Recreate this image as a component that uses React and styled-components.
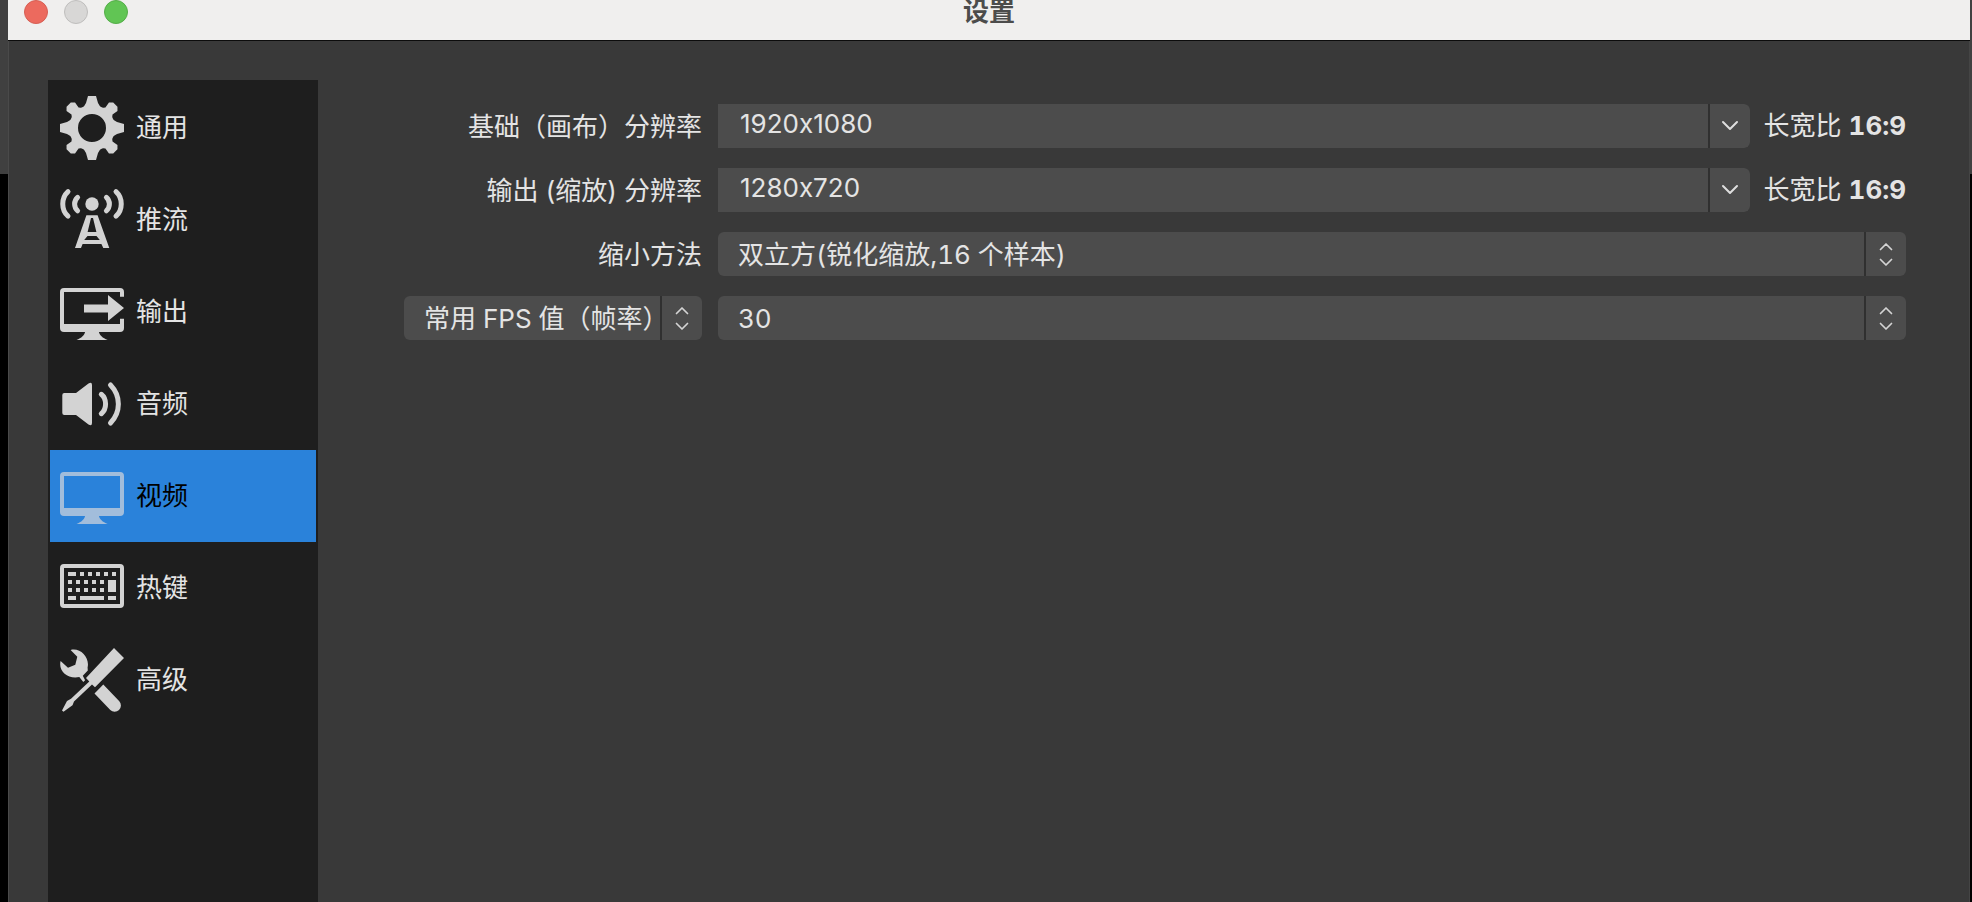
import React, { useState } from "react";
import styled, { createGlobalStyle } from "styled-components";

const GlobalStyle = createGlobalStyle`
  *, *::before, *::after { box-sizing: border-box; }
  body {
    margin: 0;
    background: #000;
    color: #e4e4e4;
    font-family: Inter, "Noto Sans CJK SC", sans-serif;
    font-size: 26px;
    line-height: 32px;
    font-feature-settings: "calt" 0;
  }
  button, input, select {
    font: inherit;
    font-feature-settings: inherit;
    color: inherit;
    margin: 0;
  }
`;

const Desktop = styled.div`
  min-height: 100vh;
  display: flex;
  padding: 0 2px 0 8px;
  background: linear-gradient(#404040 174px, #000 174px);
`;

const Window = styled.div`
  flex: 1;
  min-width: 0;
  display: flex;
  flex-direction: column;
  background: #393939;
`;

const TitleBar = styled.header`
  display: grid;
  grid-template-columns: 1fr auto 1fr;
  align-items: start;
  height: 41px;
  padding: 0 16px;
  background: #f0efee;
  border-bottom: 1px solid #0c0c0c;
`;

const Lights = styled.div`
  display: flex;
  gap: 16px;
`;

const Light = styled.button`
  width: 24px;
  height: 24px;
  padding: 0;
  border: 1px solid ${(p) => p.$edge};
  border-radius: 50%;
  background: ${(p) => p.$color};
`;

const Title = styled.h1`
  margin: 0;
  font-size: 26px;
  line-height: 24px;
  font-weight: 600;
  color: #4c4c4b;
`;

const Body = styled.div`
  flex: 1;
  display: flex;
  padding: 39px 64px 0 40px;
  gap: 86px;
  box-shadow: inset 1px 0 #4a4a4a, inset -1px 0 #454545;
`;

const Sidebar = styled.nav`
  flex: none;
  width: 270px;
  padding: 2px;
  background: #1e1e1e;
`;

const NavItem = styled.button`
  display: flex;
  align-items: center;
  gap: 12px;
  width: 100%;
  height: 92px;
  padding: 0 10px;
  border: 0;
  text-align: left;
  background: ${(p) => (p.$active ? "#2a82da" : "transparent")};
  color: ${(p) => (p.$active ? "#000" : "#e4e4e4")};

  svg {
    width: 64px;
    height: 64px;
    flex: none;
    color: ${(p) => (p.$active ? "#a2bddb" : "#d3d3d3")};
  }
`;

const Form = styled.form`
  flex: 1;
  min-width: 0;
  display: flex;
  flex-direction: column;
  gap: 20px;
  padding-top: 24px;
`;

const Row = styled.div`
  display: grid;
  grid-template-columns: 298px 1fr;
  gap: 16px;
  height: 44px;
  align-items: center;
`;

const Label = styled.label`
  padding-top: 2px;
  text-align: right;
  white-space: nowrap;
`;

const Field = styled.div`
  display: flex;
  align-items: center;
  gap: 14px;
`;

const Combo = styled.div`
  flex: 1;
  min-width: 0;
  display: flex;
  gap: 2px;
  height: 44px;
  border-radius: 0 6px 6px 0;
  background: #303030;
  overflow: hidden;
`;

const ComboInput = styled.input`
  flex: 1;
  min-width: 0;
  padding: 0 22px 4px;
  border: 0;
  outline: 0;
  background: #4c4c4c;
`;

const ComboButton = styled.button`
  display: grid;
  place-items: center;
  width: 40px;
  padding: 0;
  border: 0;
  background: #4c4c4c;
`;

const SelectShell = styled.div`
  display: grid;
  grid-template-columns: 1fr 42px;
  height: 44px;
  border-radius: 6px;
  background: #4c4c4c;
  overflow: hidden;
`;

const Select = styled.select`
  grid-area: 1 / 1 / 2 / 3;
  width: 100%;
  min-width: 0;
  padding: 2px 42px 0 20px;
  border: 0;
  outline: 0;
  appearance: none;
  background: transparent;
  font-variant-numeric: tabular-nums;

  option { background: #4c4c4c; }
`;

const Stepper = styled.span`
  grid-area: 1 / 2;
  display: grid;
  place-items: center;
  border-left: 2px solid #303030;
  pointer-events: none;
`;

const Ratio = styled.span`
  min-width: 142px;
  white-space: nowrap;
  font-variant-numeric: tabular-nums;
`;

const Glyph = ({ children }) => (
  <svg viewBox="0 0 64 64" fill="currentColor" aria-hidden="true">{children}</svg>
);

const Gear = () => (
  <Glyph>
    <path fillRule="evenodd" d="M32 9a23 23 0 1 0 0 46a23 23 0 1 0 0-46zM32 18a14 14 0 1 1 0 28a14 14 0 1 1 0-28z" />
    {[0, 90, 180, 270].map((a) => (
      <path key={a} d="M28 0h8l2 7 3 5H23l3-5z" transform={`rotate(${a} 32 32)`} />
    ))}
    {[45, 135, 225, 315].map((a) => (
      <path key={a} d="M29-1h6l3 3-1 6 4 5H23l4-5-1-6z" transform={`rotate(${a} 32 32)`} />
    ))}
  </Glyph>
);

const Antenna = () => (
  <Glyph>
    <circle cx="32" cy="16" r="6.7" />
    <g fill="none" stroke="currentColor" strokeWidth="5" strokeLinecap="round">
      <path d="M8 3.6C1 10 1 22 8 28.2" />
      <path d="M56 3.6C63 10 63 22 56 28.2" />
      <path d="M17.6 9.4C13.6 13 13.6 19 17.6 22.8" />
      <path d="M46.4 9.4C50.4 13 50.4 19 46.4 22.8" />
    </g>
    <path
      fillRule="evenodd"
      d="M26.4 27.3h11.2L49.3 60h-6l-1.9-4H22.6L21 60h-6zM31 30l-3.4 14h8.8L33 30zM27.5 48l-3.3 4h15.6l-3.3-4z"
    />
  </Glyph>
);

const Stand = () => <path d="M25.3 51h13.4c.6 4.200 4 7 9 9H16.500c5-2 8.200-4.800 8.800-9z" />;

const MonitorArrow = () => (
  <Glyph>
    <path d="M4 8h56a4 4 0 0 1 4 4v4.700h-4V12H4v32h56v-5.300h4V48a4 4 0 0 1-4 4H4a4 4 0 0 1-4-4V12a4 4 0 0 1 4-4z" />
    <path d="M24 24.500h24V15l16 13-16 13v-8.500H24z" />
    <Stand />
  </Glyph>
);

const Monitor = () => (
  <Glyph>
    <path fillRule="evenodd" d="M4 8h56a4 4 0 0 1 4 4v36a4 4 0 0 1-4 4H4a4 4 0 0 1-4-4V12a4 4 0 0 1 4-4zM4 12v32h56V12z" />
    <Stand />
  </Glyph>
);

const Speaker = () => (
  <Glyph>
    <path d="M4.300 21H16L28.500 11.400Q32 9.500 32 13v38q0 3.500-3.500 1.600L16 43H4.300q-2 0-2-2V23q0-2 2-2z" />
    <g fill="none" stroke="currentColor" strokeWidth="5" strokeLinecap="round">
      <path d="M41.300 22.300C47 27 47 37 41.300 41.700" />
      <path d="M50.500 13C61 24 61 40 50.500 51" />
    </g>
  </Glyph>
);

const KEYS = [
  [8, 16, 8, 4], [20, 16, 4, 4], [28, 16, 4, 4], [36, 16, 4, 4], [44, 16, 4, 4], [52, 16, 4, 4],
  [8, 24, 4, 4], [16, 24, 4, 4], [24, 24, 4, 4], [32, 24, 4, 4], [40, 24, 4, 4], [48, 24, 8, 12],
  [8, 32, 4, 4], [16, 32, 4, 4], [24, 32, 4, 4], [32, 32, 4, 4], [40, 32, 4, 4],
  [8, 40, 8, 4], [20, 40, 24, 4], [48, 40, 8, 4],
];

const Keyboard = () => (
  <Glyph>
    <path fillRule="evenodd" d="M4 8h56a4 4 0 0 1 4 4v36a4 4 0 0 1-4 4H4a4 4 0 0 1-4-4V12a4 4 0 0 1 4-4zM4 12v36h56V12z" />
    {KEYS.map(([x, y, width, height]) => (
      <rect key={`${x}-${y}`} x={x} y={y} width={width} height={height} />
    ))}
  </Glyph>
);

const Tools = () => (
  <Glyph>
    <path d="M54 0l10 10-29 29.300-3-2.800L14 53.500l-1.500 3.700L3.500 63.800 2 62.500l5-9.500 4-2.300 18.300-17.200L26 30z" />
    <path d="M43.300 36.500L59.300 53.300a6.300 6.300 0 0 1-9 8.800L34.500 45.500z" />
    <path d="M10.600 1.900C20-.8 30 9 27.600 19.500l.2 3-5 5.300 2.300 4.500-1.800 1.700-4-5C8 31.500-2 23 .6 13L8 19.700l7.300-3L17.300 8.700z" />
  </Glyph>
);

const ChevronDown = () => (
  <svg width="18" height="12" viewBox="0 0 18 12" fill="none" stroke="#dedede" strokeWidth="2" strokeLinecap="round" strokeLinejoin="round" aria-hidden="true">
    <path d="M2 2l7 7 7-7" />
  </svg>
);

const UpDown = () => (
  <svg width="14" height="26" viewBox="0 0 14 26" fill="none" stroke="#d4d4d4" strokeWidth="1.700" strokeLinecap="round" strokeLinejoin="round" aria-hidden="true">
    <path d="M1.500 8.500L7 3l5.500 5.500M1.500 18.500L7 24l5.500-5.500" />
  </svg>
);

const PAGES = [
  ["通用", Gear],
  ["推流", Antenna],
  ["输出", MonitorArrow],
  ["音频", Speaker],
  ["视频", Monitor],
  ["热键", Keyboard],
  ["高级", Tools],
];

function ResolutionRow({ id, label, value }) {
  return (
    <Row>
      <Label htmlFor={id}>{label}</Label>
      <Field>
        <Combo>
          <ComboInput id={id} defaultValue={value} />
          <ComboButton type="button" aria-label={label}>
            <ChevronDown />
          </ComboButton>
        </Combo>
        <Ratio>长宽比 <b>16:9</b></Ratio>
      </Field>
    </Row>
  );
}

function PopUp({ children, ...rest }) {
  return (
    <SelectShell>
      <Select {...rest}>
        <option>{children}</option>
      </Select>
      <Stepper>
        <UpDown />
      </Stepper>
    </SelectShell>
  );
}

export default function App() {
  const [page, setPage] = useState("视频");
  return (
    <>
      <GlobalStyle />
      <Desktop>
        <Window>
          <TitleBar>
            <Lights>
              <Light $color="#ec6a5e" $edge="#d65f54" aria-label="关闭" />
              <Light $color="#d8d7d6" $edge="#bfbebd" aria-label="最小化" />
              <Light $color="#61c554" $edge="#55ad49" aria-label="缩放" />
            </Lights>
            <Title>设置</Title>
          </TitleBar>
          <Body>
            <Sidebar>
              {PAGES.map(([name, Icon]) => (
                <NavItem key={name} $active={name === page} onClick={() => setPage(name)}>
                  <Icon />
                  {name}
                </NavItem>
              ))}
            </Sidebar>
            <Form>
              <ResolutionRow id="base" label="基础（画布）分辨率" value="1920x1080" />
              <ResolutionRow id="output" label="输出 (缩放) 分辨率" value="1280x720" />
              <Row>
                <Label htmlFor="filter">缩小方法</Label>
                <PopUp id="filter">双立方(锐化缩放,16 个样本)</PopUp>
              </Row>
              <Row>
                <PopUp aria-label="FPS">常用 FPS 值（帧率）</PopUp>
                <PopUp aria-label="常用 FPS 值（帧率）">30</PopUp>
              </Row>
            </Form>
          </Body>
        </Window>
      </Desktop>
    </>
  );
}
